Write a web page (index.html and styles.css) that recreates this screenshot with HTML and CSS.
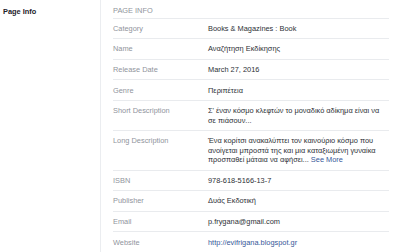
FILE: index.html
```html
<!DOCTYPE html>
<html>
<head>
<meta charset="utf-8">
<link rel="stylesheet" href="styles.css">
</head>
<body>
<div class="page">
  <aside class="side"><div class="side-title">Page Info</div></aside>
  <main class="main">
    <div class="head">PAGE INFO</div>
    <div class="row"><div class="label">Category</div><div class="value">Books &amp; Magazines : Book</div></div>
    <div class="row"><div class="label">Name</div><div class="value">Αναζήτηση Εκδίκησης</div></div>
    <div class="row"><div class="label">Release Date</div><div class="value">March 27, 2016</div></div>
    <div class="row"><div class="label">Genre</div><div class="value">Περιπέτεια</div></div>
    <div class="row"><div class="label">Short Description</div><div class="value">Σ' έναν κόσμο κλεφτών το μοναδικό αδίκημα είναι να σε πιάσουν...</div></div>
    <div class="row"><div class="label">Long Description</div><div class="value">Ένα κορίτσι ανακαλύπτει τον καινούριο κόσμο που ανοίγεται μπροστά της και μια καταξιωμένη γυναίκα προσπαθεί μάταια να αφήσει... <span class="link">See More</span></div></div>
    <div class="row"><div class="label">ISBN</div><div class="value">978-618-5166-13-7</div></div>
    <div class="row"><div class="label">Publisher</div><div class="value">Δυάς Εκδοτική</div></div>
    <div class="row"><div class="label">Email</div><div class="value">p.frygana@gmail.com</div></div>
    <div class="row"><div class="label">Website</div><div class="value"><span class="link">http://evifrigana.blogspot.gr</span></div></div>
  </main>
</div>
</body>
</html>
```
FILE: styles.css
```css
html, body {
  margin: 0;
  padding: 0;
  background: #fff;
}
body {
  font-family: "Liberation Sans", Arial, sans-serif;
  font-size: 7.4px;
  color: #1d2129;
}
.page {
  display: flex;
  height: 252px;
  overflow: hidden;
}
.side {
  width: 100px;
  border-right: 1px solid #ebedf0;
  flex: none;
}
.side-title {
  font-weight: bold;
  padding: 7px 0 0 3px;
  line-height: 9.5px;
  color: #1d2129;
}
.main {
  width: 276px;
  margin-left: 12px;
}
.head {
  color: #90949c;
  line-height: 9.5px;
  padding: 6px 0 2px 0;
  border-bottom: 1px solid #e9ebee;
}
.row {
  display: flex;
  border-bottom: 1px solid #e9ebee;
  padding: 5.3px 0 4.8px 0;
  line-height: 9.5px;
}
.label {
  width: 95px;
  flex: none;
  color: #90949c;
}
.value {
  width: 173px;
  color: #2d3036;
}
.link {
  color: #365899;
}
```
